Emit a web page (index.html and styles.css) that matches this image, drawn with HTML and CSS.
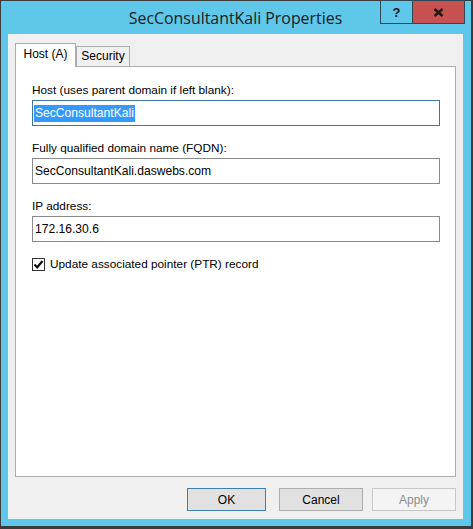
FILE: index.html
```html
<!DOCTYPE html>
<html>
<head>
<meta charset="utf-8">
<link rel="stylesheet" href="styles.css">
</head>
<body>
<div class="window">
  <div class="titlebar">
    <div></div>
    <div class="title">SecConsultantKali Properties</div>
    <div class="caption">
      <div class="cbtn help">?</div>
      <div class="cbtn close">
        <svg width="11" height="9" viewBox="0 0 11 9"><path d="M1.5 1 L9.5 8 M9.5 1 L1.5 8" stroke="#1a1a1a" stroke-width="2.4" fill="none"/></svg>
      </div>
    </div>
  </div>
  <div class="client">
    <div class="tabs">
      <div class="tab active">Host (A)</div>
      <div class="tab">Security</div>
    </div>
    <div class="panel">
      <div class="field">
        <div class="label">Host (uses parent domain if left blank):</div>
        <div class="input focused"><span class="sel">SecConsultantKali</span></div>
      </div>
      <div class="field">
        <div class="label">Fully qualified domain name (FQDN):</div>
        <div class="input"><span class="val">SecConsultantKali.daswebs.com</span></div>
      </div>
      <div class="field">
        <div class="label">IP address:</div>
        <div class="input"><span class="val">172.16.30.6</span></div>
      </div>
      <div class="check">
        <span class="box"><svg width="11" height="11" viewBox="0 0 11 11"><path d="M1.5 5.5 L4.2 8.3 L9.5 2" stroke="#111" stroke-width="2.2" fill="none"/></svg></span>
        <span class="label-text">Update associated pointer (PTR) record</span>
      </div>
    </div>
    <div class="buttons">
      <div class="btn ok">OK</div>
      <div class="btn cancel">Cancel</div>
      <div class="btn apply">Apply</div>
    </div>
  </div>
</div>
</body>
</html>
```
FILE: styles.css
```css
body {
  margin: 0;
  font-family: "Liberation Sans", Arial, sans-serif;
}
.window {
  width: 473px;
  height: 529px;
  box-sizing: border-box;
  background: #5fc7ea;
  border: 1px solid #3b3b3b;
  border-right-width: 2px;
  border-bottom-width: 3px;
  padding: 0 8px 7px 7px;
  display: flex;
  flex-direction: column;
}
.titlebar {
  height: 33px;
  flex: none;
  display: grid;
  grid-template-columns: 1fr auto 1fr;
  align-items: start;
}
.title {
  font-family: "Open Sans", sans-serif;
  font-size: 15.9px;
  color: #1b1b1b;
  line-height: 20px;
  padding-top: 7px;
  white-space: nowrap;
}
.caption {
  justify-self: end;
  display: flex;
  margin-top: -1px;
  margin-right: -2px;
}
.cbtn {
  height: 24px;
  box-sizing: border-box;
  border: 1px solid #2f4a55;
  display: flex;
  align-items: center;
  justify-content: center;
}
.help {
  width: 32px;
  border-right: none;
  font-weight: bold;
  font-size: 13px;
  color: #111;
}
.close {
  width: 53px;
  background: #c75050;
}
.client {
  flex: 1;
  background: #f0f0f0;
  display: flex;
  flex-direction: column;
  padding: 9px 7px 8px 7px;
}
.tabs {
  display: flex;
  align-items: flex-end;
  height: 23px;
  position: relative;
  z-index: 1;
}
.tab {
  box-sizing: border-box;
  border: 1px solid #adadad;
  border-bottom: none;
  background: #f0f0f0;
  height: 20px;
  width: 54px;
  font-size: 12px;
  line-height: 19px;
  text-align: center;
  color: #000;
}
.tab.active {
  background: #fff;
  height: 24px;
  width: 61px;
  margin-bottom: -1px;
  line-height: 21px;
}
.panel {
  height: 411px;
  flex: none;
  box-sizing: border-box;
  background: #fff;
  border: 1px solid #adadad;
  padding: 16px 15px 0 16px;
}
.field {
  margin-bottom: 15px;
}
.label {
  font-size: 11.8px;
  line-height: 14px;
  margin-bottom: 3px;
  color: #000;
}
.input {
  height: 26px;
  box-sizing: border-box;
  border: 1px solid #8a8a8a;
  font-size: 12.1px;
  padding-left: 1px;
  display: flex;
  align-items: center;
  color: #000;
}
.input.focused {
  border-color: #44739e;
}
.val {
  padding-left: 1px;
}
.sel {
  background: #3399ff;
  color: #fff;
  line-height: 17px;
  padding: 0 1px;
}
.check {
  display: flex;
  align-items: center;
  gap: 5px;
  font-size: 11.8px;
  line-height: 14px;
}
.box {
  width: 13px;
  height: 13px;
  box-sizing: border-box;
  border: 1px solid #333;
  background: #fff;
  display: flex;
  align-items: center;
  justify-content: center;
}
.buttons {
  margin-top: 11px;
  display: flex;
  justify-content: flex-end;
}
.btn {
  height: 23px;
  box-sizing: border-box;
  border: 1px solid #adadad;
  background: #e1e1e1;
  font-size: 12px;
  display: flex;
  align-items: center;
  justify-content: center;
  color: #000;
}
.ok {
  width: 79px;
  border-color: #3c7fb1;
}
.cancel {
  width: 84px;
  margin-left: 13px;
}
.apply {
  width: 84px;
  margin-left: 9px;
  background: #f4f4f4;
  border-color: #c7c7c7;
  color: #8d8d8d;
}
```
